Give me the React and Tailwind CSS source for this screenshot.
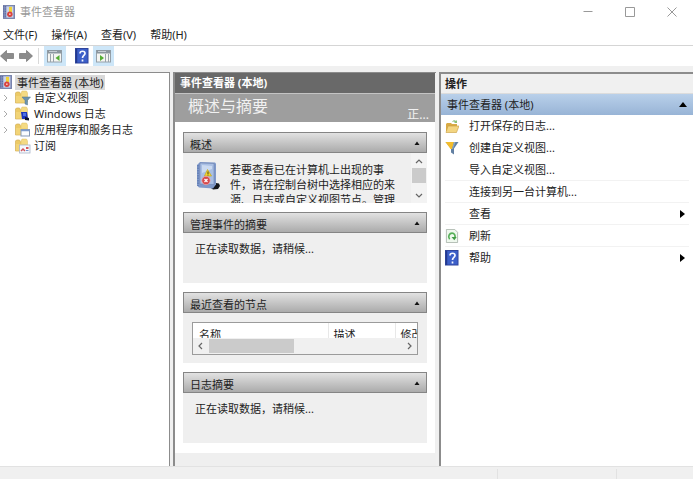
import { useState } from "react";

const menus = ["文件(F)", "操作(A)", "查看(V)", "帮助(H)"];

const treeItems = [
  { label: "自定义视图", kind: "filter", expandable: true },
  { label: "Windows 日志", kind: "windows", expandable: true },
  { label: "应用程序和服务日志", kind: "apps", expandable: true },
  { label: "订阅", kind: "subscribe", expandable: false },
];

function LogIcon({ className }) {
  return (
    <svg viewBox="0 0 14 16" className={className} aria-hidden="true">
      <rect x="0.5" y="0.5" width="13" height="15" fill="#8793bd" stroke="#6f7ba6" />
      <path d="M1 1v14M3 1v14" stroke="#4c5b9b" strokeWidth="1" strokeDasharray="1 1" />
      <rect x="4" y="1.5" width="8" height="13" fill="#c9d3ea" />
      <path d="M7 2h3.500v6H7z" fill="#f2d335" />
      <circle cx="8" cy="10.5" r="3.200" fill="#d9433f" />
      <circle cx="8" cy="10.5" r="1" fill="#f7c8c0" />
    </svg>
  );
}

function BookIcon({ className }) {
  return (
    <svg viewBox="0 0 26 30" className={className} aria-hidden="true">
      <path d="M14 24l5 1 2-3 3 .5 1 2.500-2 3-5 .5-4-3z" fill="#15171c" />
      <path d="M2 4l3-3 15 .5 1 1v21l-3 4-14-1-2-2z" fill="#7f99ca" />
      <path d="M5 2l14 .5v21L5 23z" fill="#a9bfe4" stroke="#7085b0" strokeWidth="0.6" />
      <path d="M3 4v21" stroke="#526da6" strokeWidth="1" strokeDasharray="1.500 1" />
      <path d="M7 4l10 1v3L7 12z" fill="#cbdaf1" />
      <path d="M12.500 8.500l4 6.500h-7z" fill="#f5d72f" stroke="#c6a81f" strokeWidth="0.7" />
      <path d="M13 10.500v2.500M13 13.500v1" stroke="#4b4210" />
      <circle cx="11" cy="19.500" r="4.200" fill="#d64a4e" stroke="#f1b0b0" strokeWidth="0.7" />
      <path d="M9.500 18l3 3M12.500 18l-3 3" stroke="#fff" strokeWidth="1.200" />
    </svg>
  );
}

function FolderIcon({ kind }) {
  return (
    <svg viewBox="0 0 16 16" className="size-4 shrink-0" aria-hidden="true">
      <path d="M0.500 3l1-1h3l1 2h6v9h-11z" fill="#ecca66" stroke="#d4b057" strokeWidth="0.7" />
      <path d="M7 1h4.500l1 2v9H6V3z" fill="#f4da83" stroke="#dcbc62" strokeWidth="0.5" />
      <path d="M1 6h11v6.500H1z" fill="#f2d477" />
      {kind === "filter" && (
        <path d="M7 7h8.500l-3 3.500V15l-2.500-1v-3.500z" fill="#6d93ae" stroke="#54788f" strokeWidth="0.5" />
      )}
      {kind === "windows" && (
        <>
          <path d="M6 6h6l1 7H7z" fill="#1b35bd" />
          <path d="M8 7h3v3H8z" fill="#4e70e3" />
          <path d="M10 11l4 1v2.500l-4-.5z" fill="#10142e" />
        </>
      )}
      {kind === "apps" && (
        <>
          <rect x="6" y="7.500" width="8.500" height="6.500" fill="#fafcff" stroke="#8799b5" />
          <path d="M6 8.500h8.500" stroke="#7e9cce" strokeWidth="1.500" />
        </>
      )}
      {kind === "subscribe" && (
        <>
          <rect x="4.500" y="7" width="10.500" height="8" fill="#f5f8fd" stroke="#a9b5c9" strokeWidth="0.8" />
          <path d="M6 13l2-2 2 2" stroke="#d2545b" strokeWidth="1.500" fill="none" />
          <path d="M11 9h2.500v2H11z" fill="#db5a5a" />
          <path d="M11 12.500h2.500" stroke="#6f92cf" />
        </>
      )}
    </svg>
  );
}

function HelpIcon() {
  return (
    <svg viewBox="0 0 14 16" className="h-4 w-3.5" aria-hidden="true">
      <rect x="0.5" y="0.5" width="12.500" height="14.500" fill="#3c5fc9" stroke="#2f459c" />
      <path d="M1.500 1v14" stroke="#23398f" strokeWidth="1.500" />
      <path d="M5 5.500C5 2.500 10 2.500 10 5.500c0 2-2.500 2-2.500 4.500M7.500 11.500v2" stroke="#f4f7ff" strokeWidth="1.700" fill="none" />
    </svg>
  );
}

function ArrowIcon({ flip }) {
  return (
    <svg viewBox="0 0 14 12" className={flip ? "h-3.5 w-3.5 rotate-180" : "h-3.5 w-3.5"} aria-hidden="true">
      <path d="M0.500 6L6.500 0.500V3.500H13.500V8.500H6.500V11.500z" fill="#8c8c8c" stroke="#737373" strokeWidth="0.7" />
    </svg>
  );
}

function PaneIcon({ flip }) {
  return (
    <svg viewBox="0 0 16 14" className="h-3.5 w-4" aria-hidden="true">
      <rect x="0.5" y="1.500" width="14" height="11.500" fill="#f5f5f2" stroke="#96a0a8" />
      <rect x="0.5" y="1" width="14" height="3.500" fill="#8c979f" />
      <path d="M2 2.500h8" stroke="#c6ced4" />
      {flip ? (
        <>
          <path d="M9.500 5v8M12.500 5v8" stroke="#9aa4ac" />
          <path d="M4 6l4 3-4 3z" fill="#55ad35" />
        </>
      ) : (
        <>
          <path d="M3.500 5v8M6.500 5v8" stroke="#9aa4ac" />
          <path d="M12.500 6l-4 3 4 3z" fill="#55ad35" />
        </>
      )}
    </svg>
  );
}

function OpenIcon() {
  return (
    <svg viewBox="0 0 14 14" className="size-3.5" aria-hidden="true">
      <path d="M1 5l1-1h4l1 1h5v7H1z" fill="#d9ab45" />
      <path d="M3 7h11l-2.500 6.500H1z" fill="#f3d581" stroke="#c89c3d" strokeWidth="0.6" />
      <path d="M7 3c1-2 3-2 4-1l1-1v3H9l1-1C9 2 8 2.500 7 3z" fill="#8bc07b" />
    </svg>
  );
}

function FunnelIcon() {
  return (
    <svg viewBox="0 0 14 14" className="size-3.5" aria-hidden="true">
      <path d="M0.500 1H13.500L9 7.500V13.500L6 11.500V7.500z" fill="#6280a2" />
      <path d="M0.500 1H9L7 8H5.500z" fill="#f3bd2d" />
      <path d="M9 1h1.500L8 8H7z" fill="#8fabc6" />
    </svg>
  );
}

function RefreshIcon() {
  return (
    <svg viewBox="0 0 13 15" className="h-3.5 w-3.5" aria-hidden="true">
      <path d="M0.500 0.500H9.500L12.500 3.500V14.500H0.500z" fill="#eff8ee" stroke="#9eaaa0" strokeWidth="0.8" />
      <path d="M4 11C1.500 8 4 4.500 6.500 4.500S10.500 7 9.500 9.500" stroke="#55af57" strokeWidth="1.800" fill="none" />
      <path d="M6 8.500h5.500L9 12z" fill="#419d45" />
    </svg>
  );
}

const actions = [
  { label: "打开保存的日志...", icon: <OpenIcon /> },
  { label: "创建自定义视图...", icon: <FunnelIcon /> },
  { label: "导入自定义视图...", line: true },
  { label: "连接到另一台计算机...", line: true },
  { label: "查看", more: true, line: true },
  { label: "刷新", icon: <RefreshIcon />, line: true },
  { label: "帮助", icon: <HelpIcon />, more: true },
];

function Chevron({ d }) {
  return (
    <svg viewBox="0 0 8 8" className="size-2" fill="none" stroke="#666" strokeWidth="1.2" aria-hidden="true">
      <path d={d} />
    </svg>
  );
}

function Section({ title, children }) {
  const [open, setOpen] = useState(true);

  return (
    <section>
      <button
        onClick={() => setOpen(!open)}
        className="flex h-[21px] w-full items-center justify-between border border-[#858585] bg-linear-to-b from-[#e2e2e2] to-[#ababab] px-1.5 pt-1"
      >
        <span>{title}</span>
        <svg viewBox="0 0 6 4" className="mb-1 h-1 w-1.5" aria-hidden="true">
          <path d="M0.500 4L3 0.500L5.500 4z" fill="#111" />
        </svg>
      </button>
      {open && <div className="h-[50px] overflow-hidden bg-[#efefef]">{children}</div>}
    </section>
  );
}

function TitleBar() {
  return (
    <header className="flex h-6 items-center pl-[3px]">
      <LogIcon className="h-3.5 w-3" />
      <h1 className="ml-[5px] flex-1 text-[#999]">事件查看器</h1>
      <button aria-label="最小化" className="flex h-6 w-[42px] items-center justify-center">
        <svg viewBox="0 0 10 10" className="size-2.5" stroke="#999">
          <path d="M0.500 4.500h9" />
        </svg>
      </button>
      <button aria-label="最大化" className="flex h-6 w-[42px] items-center justify-center">
        <svg viewBox="0 0 10 10" className="size-2.5" stroke="#999" fill="none">
          <path d="M0.500 0.500h9v9h-9z" />
        </svg>
      </button>
      <button aria-label="关闭" className="flex h-6 w-[42px] items-center justify-center">
        <svg viewBox="0 0 10 10" className="size-2.5" stroke="#999">
          <path d="M0.500 0.500l9 9M9.500 0.500l-9 9" />
        </svg>
      </button>
    </header>
  );
}

function Toolbar() {
  return (
    <div className="flex h-[21px] items-center border-t border-[#d5d5d5]">
      <button aria-label="后退">
        <ArrowIcon />
      </button>
      <button aria-label="前进" className="ml-[5px]">
        <ArrowIcon flip />
      </button>
      <div className="ml-[5px] h-4 w-px bg-[#d9d9d9]" />
      <button aria-label="控制台树" className="ml-[5px] flex h-5 w-[22px] items-center justify-center bg-[#cde6f8]">
        <PaneIcon />
      </button>
      <button aria-label="帮助" className="ml-[9px]">
        <HelpIcon />
      </button>
      <button aria-label="操作窗格" className="ml-1 flex h-5 w-[21px] items-center justify-center bg-[#cde6f8]">
        <PaneIcon flip />
      </button>
    </div>
  );
}

function Tree() {
  return (
    <nav className="border-t border-r border-[#8c8c8c] bg-white pt-px">
      <div className="flex h-4 items-center">
        <LogIcon className="h-3.5 w-3" />
        <a href="#root-node" className="ml-[3px] bg-[#d9d9d9] px-0.5 leading-[15px]">
          事件查看器 (本地)
        </a>
      </div>
      <ul>
        {treeItems.map((item) => (
          <li key={item.label} className="flex h-4 items-center">
            <span className="flex w-[15px] pl-[3px]">
              {item.expandable && (
                <svg viewBox="0 0 6 8" className="h-2 w-1.5" fill="none" stroke="#aaa">
                  <path d="M1 1l3 3-3 3" />
                </svg>
              )}
            </span>
            <FolderIcon kind={item.kind} />
            <a href="#node" className="ml-[3px]">
              {item.label}
            </a>
          </li>
        ))}
      </ul>
    </nav>
  );
}

function Summary() {
  return (
    <main className="flex min-w-0 flex-col border-t border-l-2 border-[#8c8c8c] bg-[#efefef] pr-px">
      <h2 className="h-[21px] border-b border-[#c4c4c4] bg-[#696969] pl-[5px] font-bold leading-5 text-white">
        事件查看器 (本地)
      </h2>
      <div className="flex h-7 justify-between bg-[#9e9e9e] pr-1.5 pl-[13px] text-[#f1f1f1]">
        <span className="text-base leading-6">概述与摘要</span>
        <span className="self-end text-xs leading-[14px]">正...</span>
      </div>
      <div className="flex flex-col gap-[9px] bg-white px-2 py-2.5">
        <Section title="概述">
          <div className="flex h-full">
            <BookIcon className="mt-2 ml-3 h-[30px] w-[26px] shrink-0" />
            <p className="ml-[9px] flex-1 pt-[9px] pr-3 leading-[15px]">
              若要查看已在计算机上出现的事件，请在控制台树中选择相应的来源、日志或自定义视图节点。管理
            </p>
            <div className="flex w-4 shrink-0 flex-col items-center bg-[#f3f3f3]">
              <button aria-label="向上滚动" className="flex h-[15px] items-center">
                <Chevron d="M1 6l3-3 3 3" />
              </button>
              <div className="h-[15px] w-3.5 bg-[#cbcbcb]" />
              <button aria-label="向下滚动" className="mt-auto flex h-[15px] items-center">
                <Chevron d="M1 2l3 3 3-3" />
              </button>
            </div>
          </div>
        </Section>
        <Section title="管理事件的摘要">
          <p className="px-3 pt-2">正在读取数据，请稍候...</p>
        </Section>
        <Section title="最近查看的节点">
          <div className="mx-[9px] mt-[9px] h-[33px] border border-[#9b9b9b] bg-white">
            <div className="h-[15px] overflow-hidden">
              <table className="w-full table-fixed text-left">
                <thead>
                  <tr className="h-6 whitespace-nowrap">
                    <th className="w-[135px] border-r border-[#e8e8e8] p-0 pl-1.5 font-normal">名称</th>
                    <th className="w-[67px] border-r border-[#e8e8e8] p-0 pl-[5px] font-normal">描述</th>
                    <th className="overflow-hidden p-0 pl-[5px] font-normal">修改</th>
                  </tr>
                </thead>
              </table>
            </div>
            <div className="flex h-4 items-center bg-[#f0f0f0]">
              <button aria-label="向左滚动" className="flex w-4 justify-center">
                <Chevron d="M5 1L2 4l3 3" />
              </button>
              <div className="h-3.5 w-[85px] bg-[#cbcbcb]" />
              <button aria-label="向右滚动" className="ml-auto flex w-4 justify-center">
                <Chevron d="M3 1l3 3-3 3" />
              </button>
            </div>
          </div>
        </Section>
        <Section title="日志摘要">
          <p className="px-3 pt-2">正在读取数据，请稍候...</p>
        </Section>
      </div>
    </main>
  );
}

function Actions() {
  return (
    <aside className="min-w-0 border-t-2 border-l-2 border-[#8c8c8c] bg-white">
      <h2 className="h-5 border-b border-[#dcdcdc] bg-[#f0f0f0] pl-1 font-bold leading-5">操作</h2>
      <button className="flex h-[21px] w-full items-center justify-between bg-linear-to-b from-[#b9d0ea] to-[#98b4d6] pr-1.5 pl-1.5">
        <span>事件查看器 (本地)</span>
        <svg viewBox="0 0 8 5" className="h-[5px] w-2" aria-hidden="true">
          <path d="M0 5L4 0l4 5z" fill="#000" />
        </svg>
      </button>
      <ul>
        {actions.map((action) => (
          <li key={action.label} className={action.line ? "mx-1 border-b border-[#f2f2f2]" : "mx-1"}>
            <button className={action.line ? "flex h-[21px] w-full items-center" : "flex h-[22px] w-full items-center"}>
              <span className="w-6">{action.icon}</span>
              <span className="flex-1 text-left">{action.label}</span>
              {action.more && (
                <svg viewBox="0 0 5 8" className="mr-1 h-2 w-[5px]" aria-hidden="true">
                  <path d="M0 0l5 4-5 4z" fill="#000" />
                </svg>
              )}
            </button>
          </li>
        ))}
      </ul>
    </aside>
  );
}

function App() {
  return (
    <div
      lang="zh-CN"
      className="flex min-h-screen flex-col bg-[#f0f0f0] font-['Noto_Sans','Noto_Sans_CJK_SC',sans-serif] text-[11px] leading-4 text-[#222]"
    >
      <div className="bg-white">
        <TitleBar />
        {/* Menu */}
        <div className="flex h-[21px] items-center gap-3.5 pl-[3px]">
          {menus.map((menu) => (
            <button key={menu}>{menu}</button>
          ))}
        </div>
        <Toolbar />
      </div>

      {/* Panes */}
      <div className="mt-1.5 grid flex-1 grid-cols-[170px_263px_1fr] gap-x-[3px]">
        <Tree />
        <Summary />
        <Actions />
      </div>

      {/* Status bar */}
      <footer className="flex h-[13px] justify-end border-t border-[#e2e2e2] pt-0.5">
        <div className="w-[119px] border-l border-[#e2e2e2]" />
        <div className="w-[77px] border-l border-[#e2e2e2]" />
      </footer>
    </div>
  );
}

export default App;
